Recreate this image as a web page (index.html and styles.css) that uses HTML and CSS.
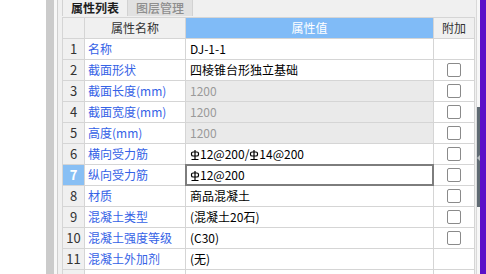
FILE: index.html
```html
<!DOCTYPE html>
<html lang="zh-CN">
<head>
<meta charset="utf-8">
<title>属性列表</title>
<link rel="stylesheet" href="styles.css">
</head>
<body>
<div class="screen">
  <div class="gutter"></div>
  <div class="side-bar"></div>
  <div class="strip"></div>
  <div class="panel">
    <div class="tabs">
      <div class="tab active">属性列表</div>
      <div class="tab">图层管理</div>
    </div>
    <div class="grid">
      <div class="hc"></div>
      <div class="hc">属性名称</div>
      <div class="hc hv">属性值</div>
      <div class="hc">附加</div>

      <div class="num">1</div><div class="name">名称</div><div class="val">DJ-1-1</div><div class="add"></div>
      <div class="num">2</div><div class="name">截面形状</div><div class="val">四棱锥台形独立基础</div><div class="add"><span class="cb"></span></div>
      <div class="num">3</div><div class="name">截面长度(mm)</div><div class="val ro">1200</div><div class="add"><span class="cb"></span></div>
      <div class="num">4</div><div class="name">截面宽度(mm)</div><div class="val ro">1200</div><div class="add"><span class="cb"></span></div>
      <div class="num">5</div><div class="name">高度(mm)</div><div class="val ro">1200</div><div class="add"><span class="cb"></span></div>
      <div class="num">6</div><div class="name">横向受力筋</div><div class="val"><svg class="rb" viewBox="0 0 10 10" width="10" height="10"><path d="M5 0V9.5M1.5 9.5H8.5" /><rect x="1.5" y="2" width="7" height="4" rx="1.6"/></svg>12@200/<svg class="rb" viewBox="0 0 10 10" width="10" height="10"><path d="M5 0V9.5M1.5 9.5H8.5" /><rect x="1.5" y="2" width="7" height="4" rx="1.6"/></svg>14@200</div><div class="add"><span class="cb"></span></div>
      <div class="num sel">7</div><div class="name">纵向受力筋</div><div class="val focus"><svg class="rb" viewBox="0 0 10 10" width="10" height="10"><path d="M5 0V9.5M1.5 9.5H8.5" /><rect x="1.5" y="2" width="7" height="4" rx="1.6"/></svg>12@200</div><div class="add"><span class="cb"></span></div>
      <div class="num">8</div><div class="name">材质</div><div class="val">商品混凝土</div><div class="add"><span class="cb"></span></div>
      <div class="num">9</div><div class="name">混凝土类型</div><div class="val">(混凝土20石)</div><div class="add"><span class="cb"></span></div>
      <div class="num">10</div><div class="name">混凝土强度等级</div><div class="val">(C30)</div><div class="add"><span class="cb"></span></div>
      <div class="num">11</div><div class="name">混凝土外加剂</div><div class="val">(无)</div><div class="add"></div>
      <div class="num"></div><div class="name"></div><div class="val"></div><div class="add"></div>
    </div>
  </div>
  <div class="vscroll"><div class="thumb"><span class="arrow"></span></div></div>
  <div class="accent"></div>
</div>
</body>
</html>
```
FILE: styles.css
```css
html, body {
  margin: 0;
  padding: 0;
  width: 486px;
  height: 274px;
  overflow: hidden;
  background: #ffffff;
}
.screen {
  display: flex;
  height: 274px;
  overflow: hidden;
  font-family: "Noto Sans CJK SC", "Noto Sans", sans-serif;
  font-size: 12px;
  color: #000;
}
.gutter {
  width: 46px;
  flex: none;
  background: #ffffff;
}
.side-bar {
  width: 8px;
  flex: none;
  background: #cbcbcb;
}
.strip {
  width: 3px;
  flex: none;
  background: #f7f7f7;
  border-right: 1px solid #cfcfcf;
}
.panel {
  flex: 1;
  min-width: 0;
  background: #f0f0f0;
  padding-left: 4px;
  border-right: 1px solid #d9d9d9;
  display: flex;
  flex-direction: column;
}
.tabs {
  display: flex;
  height: 17px;
  flex: none;
}
.tab {
  width: 65px;
  height: 16px;
  box-sizing: border-box;
  border-right: 1px solid #d2d2d2;
  background: #e1e1e1;
  color: #8e8e8e;
  font-size: 12px;
  line-height: 15px;
  text-align: center;
  font-weight: 500;
}
.tab.active {
  width: 66px;
  background: #f0f0f0;
  color: #1e1e1e;
  border-left: 1px solid #d2d2d2;
  font-weight: 700;
}
.grid {
  display: grid;
  grid-template-columns: 21px 100px 247px 40px;
  grid-auto-rows: 20px;
  gap: 1px;
  padding: 1px;
  width: 413px;
  box-sizing: border-box;
  background: #d5d5d5;
}
.hc {
  background: #f0f0f0;
  color: #333;
  font-size: 12px;
  line-height: 20px;
  text-align: center;
}
.hc.hv {
  background: #80bbf7;
  color: #ffffff;
}
.num {
  background: #f0f0f0;
  color: #333;
  font-size: 13px;
  line-height: 20px;
  text-align: center;
}
.num.sel {
  background: #88bff4;
  color: #fff;
  font-weight: 700;
}
.name {
  background: #fff;
  color: #3562e6;
  line-height: 20px;
  padding-left: 3px;
  white-space: nowrap;
}
.val {
  background: #fff;
  color: #000;
  line-height: 20px;
  padding-left: 4px;
  white-space: nowrap;
}
.val.ro {
  background: #eaeaea;
  color: #9a9a9a;
}
.val.focus {
  outline: 2px solid #7d7d7d;
  outline-offset: -1px;
}
.rb {
  vertical-align: -1px;
  fill: none;
  stroke: #000;
  stroke-width: 1.2;
}
.add {
  background: #fff;
  display: flex;
  align-items: center;
  justify-content: center;
}
.cb {
  width: 12px;
  height: 12px;
  border: 1px solid #8a8a8a;
  border-radius: 2px;
  background: #fff;
}
.vscroll {
  width: 3px;
  flex: none;
  background: #f7f7f7;
  display: flex;
  flex-direction: column;
}
.thumb {
  margin-top: 107px;
  height: 100px;
  background: #5f6a73;
  position: relative;
}
.arrow {
  position: absolute;
  left: 0;
  top: 48px;
  width: 0;
  height: 0;
  border-top: 3px solid transparent;
  border-bottom: 3px solid transparent;
  border-right: 3px solid #b8bdc1;
}
.accent {
  width: 6px;
  flex: none;
  background: #5a0fc8;
}
```
